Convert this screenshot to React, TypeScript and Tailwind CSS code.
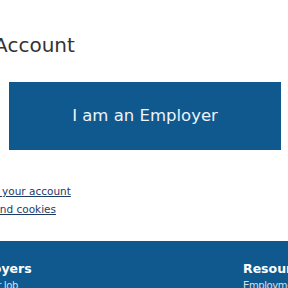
import React from 'react';

const links = [
  { label: 'Manage your account', offset: '-ml-[43px]' },
  { label: 'Privacy and cookies', offset: '-ml-[48px]' },
];

const footerCols = [
  { title: 'Employers', items: ['Post your Job', 'Search CVs'] },
  { title: 'Resources', items: ['Employment advice', 'Career tips'] },
];

export default function App() {
  return (
    <div className="w-[288px] h-[288px] overflow-hidden bg-white font-['DejaVu_Sans',sans-serif]">
      <div className="pt-[33px]">
        <h1 className="-ml-[110px] whitespace-nowrap text-[20px] leading-[24px] text-[#333333]">
          Create an Account
        </h1>

        <div className="mt-[25px] ml-[9px] w-[272px] h-[68px] bg-[#10598e] flex items-center justify-center">
          <span className="text-[16.5px] text-[#eef4fa] whitespace-nowrap">I am an Employer</span>
        </div>

        <ul className="mt-[34px] flex flex-col gap-[4px]">
          {links.map(l => (
            <li key={l.label} className={`${l.offset} whitespace-nowrap text-[10.5px] leading-[14px] text-[#1d3b66] underline`}>
              {l.label}
            </li>
          ))}
        </ul>
      </div>

      <footer className="mt-[25px] h-[100px] bg-[#10598e] pt-[19px] flex">
        {footerCols.map((c, i) => (
          <div key={c.title} className={i === 0 ? '-ml-[42px] w-[285px] shrink-0' : 'shrink-0'}>
            <div className="text-[12.5px] font-bold text-white leading-[18px] whitespace-nowrap">{c.title}</div>
            <ul className="mt-0">
              {c.items.map(t => (
                <li key={t} className="text-[10px] tracking-[-0.4px] text-[#d4e0ec] leading-[15px] whitespace-nowrap">{t}</li>
              ))}
            </ul>
          </div>
        ))}
      </footer>
    </div>
  );
}
